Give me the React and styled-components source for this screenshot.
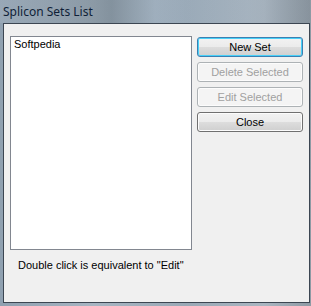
import React from "react";
import styled, { createGlobalStyle } from "styled-components";

const GlobalStyle = createGlobalStyle`
  body {
    margin: 0;
    background: #8e9aa6;
  }
`;

const Window = styled.div`
  width: 311px;
  height: 306px;
  display: flex;
  flex-direction: column;
  box-sizing: border-box;
  padding: 0 1px 3px 3px;
  background: linear-gradient(90deg, #8fa0b0 0%, #a7b5c2 30%, #9aa9b6 60%, #aab6c1 85%, #8e9aa4 100%);
  font-family: "Liberation Sans", Arial, sans-serif;
  overflow: hidden;
`;

const TitleBar = styled.div`
  height: 23px;
  display: flex;
  align-items: center;
  font-family: "Noto Sans", "Open Sans", sans-serif;
  font-size: 12px;
  color: #0f1f38;
  background: linear-gradient(90deg, rgba(190, 200, 210, 0.2) 0%, rgba(70, 85, 95, 0.35) 36%, rgba(160, 180, 200, 0.2) 50%, rgba(150, 170, 190, 0.1) 80%, rgba(120, 130, 140, 0.3) 100%);
  margin-left: -3px;
  padding-left: 3px;
`;

const Client = styled.div`
  flex: 1;
  display: flex;
  flex-direction: column;
  background: #f0f0f0;
  border: 1px solid #3c4652;
  padding: 12px 6px 0 6px;
`;

const Body = styled.div`
  display: flex;
  gap: 5px;
`;

const ListBox = styled.div`
  width: 180px;
  height: 210px;
  background: #fff;
  border: 1px solid #828790;
  padding: 1px 3px;
  box-sizing: content-box;
`;

const ListItem = styled.div`
  font-size: 11px;
  color: #000;
  line-height: 13px;
`;

const Buttons = styled.div`
  display: flex;
  flex-direction: column;
  gap: 5px;
  padding-top: 1px;
`;

const Button = styled.button`
  width: 106px;
  height: 20px;
  padding: 0;
  font-family: "Liberation Sans", Arial, sans-serif;
  font-size: 11px;
  border-radius: 3px;
  border: 1px solid ${(p) => (p.$default ? "#3c7fb1" : p.disabled ? "#adb2b5" : "#707070")};
  color: ${(p) => (p.disabled ? "#a0a0a0" : "#000")};
  background: ${(p) =>
    p.disabled
      ? "#f4f4f4"
      : "linear-gradient(#f2f2f2 0%, #ebebeb 50%, #dddddd 50%, #cfcfcf 100%)"};
  box-shadow: ${(p) => (p.$default ? "inset 0 0 0 1px #48d0f8" : "inset 0 0 0 1px #fcfcfc")};
`;

const Hint = styled.div`
  font-size: 11px;
  color: #000;
  margin: 9px 0 0 8px;
`;

export default function App() {
  return (
    <>
      <GlobalStyle />
      <Window>
        <TitleBar>Splicon Sets List</TitleBar>
        <Client>
          <Body>
            <ListBox>
              <ListItem>Softpedia</ListItem>
            </ListBox>
            <Buttons>
              <Button $default>New Set</Button>
              <Button disabled>Delete Selected</Button>
              <Button disabled>Edit Selected</Button>
              <Button>Close</Button>
            </Buttons>
          </Body>
          <Hint>Double click is equivalent to "Edit"</Hint>
        </Client>
      </Window>
    </>
  );
}
